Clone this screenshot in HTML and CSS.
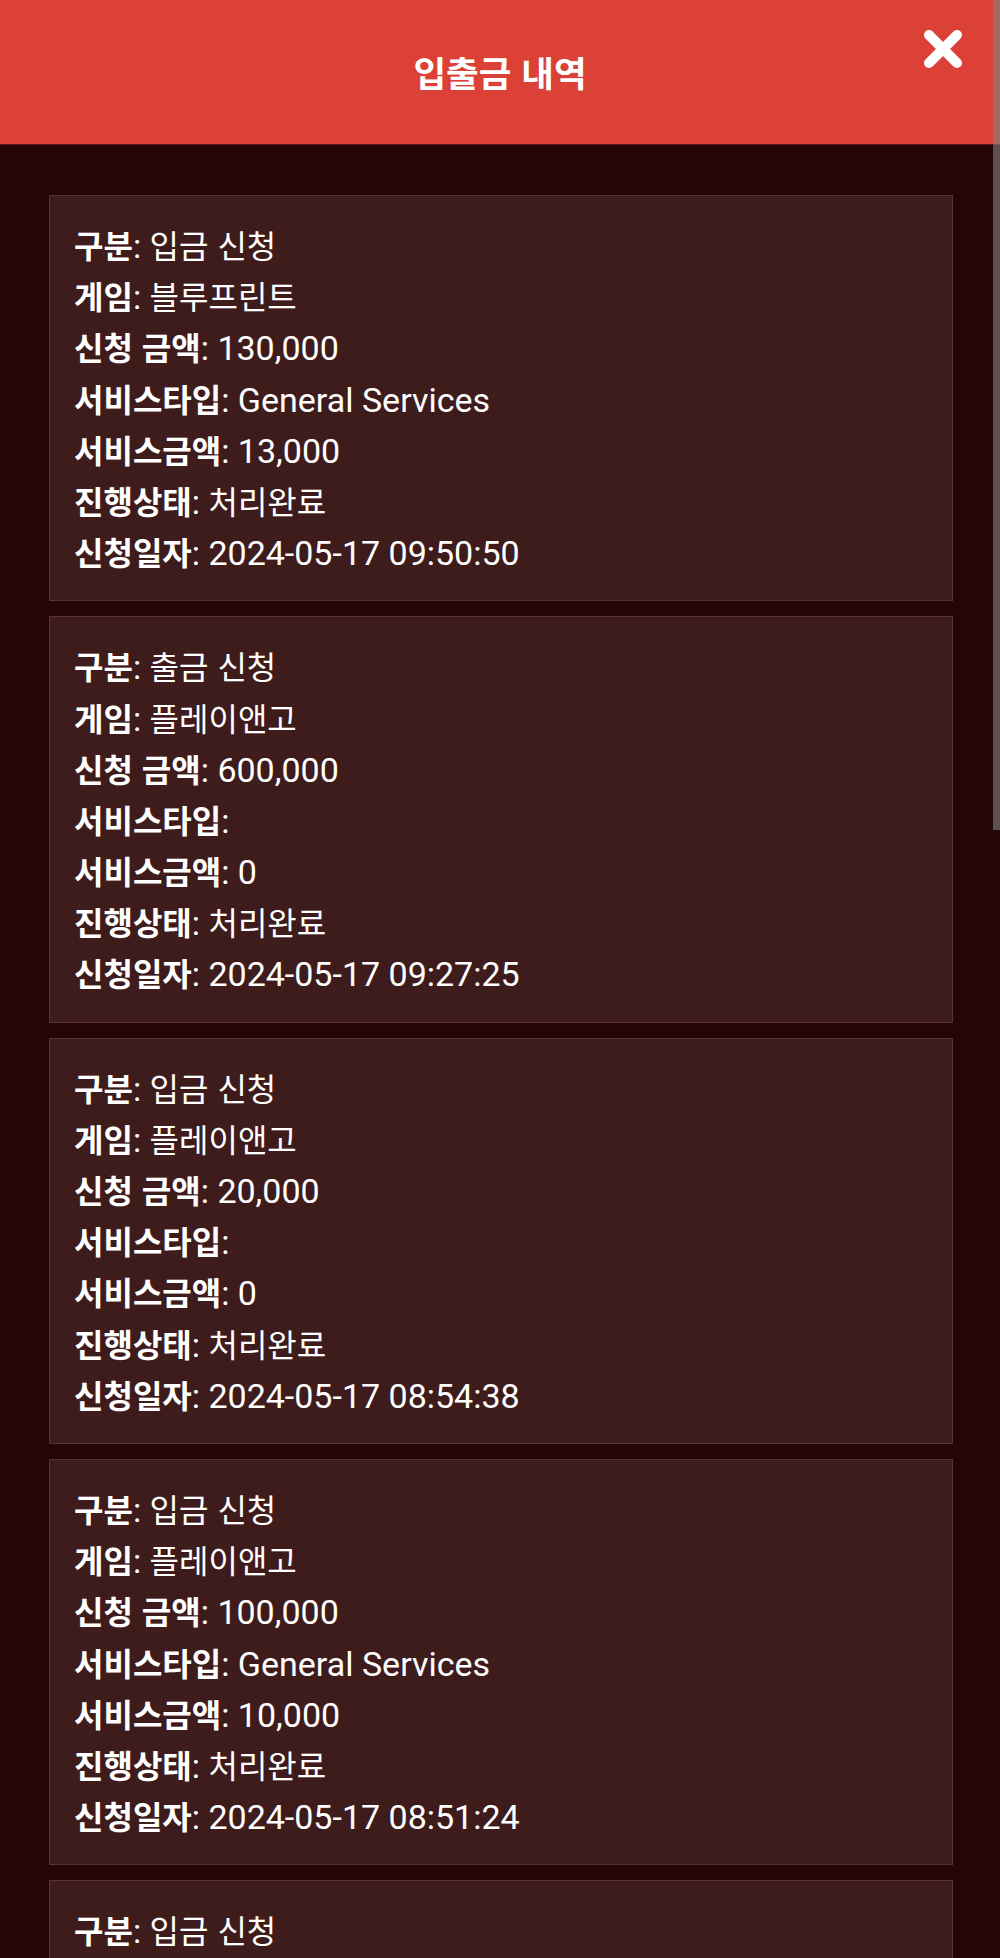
FILE: index.html
```html
<!DOCTYPE html>
<html lang="ko">
<head>
<meta charset="utf-8">
<title>입출금 내역</title>
<link rel="stylesheet" href="styles.css">
</head>
<body>
<div class="page">
  <header class="topbar">
    <h1 class="title">입출금 내역</h1>
    <button class="close" aria-label="닫기">
      <svg width="38" height="38" viewBox="0 0 38 38"><path d="M5 5 L33 33 M33 5 L5 33" stroke="#fff" stroke-width="10" stroke-linecap="round" fill="none"/></svg>
    </button>
  </header>
  <main class="list">
    <section class="card">
      <div class="row"><b class="k">구분</b>: <span class="k">입금 신청</span></div>
      <div class="row"><b class="k">게임</b>: <span class="k">블루프린트</span></div>
      <div class="row"><b class="k">신청 금액</b>: 130,000</div>
      <div class="row"><b class="k">서비스타입</b>: General Services</div>
      <div class="row"><b class="k">서비스금액</b>: 13,000</div>
      <div class="row"><b class="k">진행상태</b>: <span class="k">처리완료</span></div>
      <div class="row"><b class="k">신청일자</b>: 2024-05-17 09:50:50</div>
    </section>
    <section class="card">
      <div class="row"><b class="k">구분</b>: <span class="k">출금 신청</span></div>
      <div class="row"><b class="k">게임</b>: <span class="k">플레이앤고</span></div>
      <div class="row"><b class="k">신청 금액</b>: 600,000</div>
      <div class="row"><b class="k">서비스타입</b>:</div>
      <div class="row"><b class="k">서비스금액</b>: 0</div>
      <div class="row"><b class="k">진행상태</b>: <span class="k">처리완료</span></div>
      <div class="row"><b class="k">신청일자</b>: 2024-05-17 09:27:25</div>
    </section>
    <section class="card">
      <div class="row"><b class="k">구분</b>: <span class="k">입금 신청</span></div>
      <div class="row"><b class="k">게임</b>: <span class="k">플레이앤고</span></div>
      <div class="row"><b class="k">신청 금액</b>: 20,000</div>
      <div class="row"><b class="k">서비스타입</b>:</div>
      <div class="row"><b class="k">서비스금액</b>: 0</div>
      <div class="row"><b class="k">진행상태</b>: <span class="k">처리완료</span></div>
      <div class="row"><b class="k">신청일자</b>: 2024-05-17 08:54:38</div>
    </section>
    <section class="card">
      <div class="row"><b class="k">구분</b>: <span class="k">입금 신청</span></div>
      <div class="row"><b class="k">게임</b>: <span class="k">플레이앤고</span></div>
      <div class="row"><b class="k">신청 금액</b>: 100,000</div>
      <div class="row"><b class="k">서비스타입</b>: General Services</div>
      <div class="row"><b class="k">서비스금액</b>: 10,000</div>
      <div class="row"><b class="k">진행상태</b>: <span class="k">처리완료</span></div>
      <div class="row"><b class="k">신청일자</b>: 2024-05-17 08:51:24</div>
    </section>
    <section class="card card-last">
      <div class="row"><b class="k">구분</b>: <span class="k">입금 신청</span></div>
    </section>
  </main>
  <div class="scrollbar"></div>
</div>
</body>
</html>
```

FILE: styles.css
```css
html, body {
  margin: 0;
  padding: 0;
  height: 100%;
  overflow: hidden;
  background: #240606;
}

.page {
  position: relative;
  height: 1958px;
  overflow: hidden;
  background: #240606;
  font-family: Roboto, "Noto Sans CJK KR", sans-serif;
  color: #fff;
}

.topbar {
  height: 144px;
  background: #db4136;
  border-bottom: 1px solid #5c1d1a;
  display: flex;
  align-items: center;
  justify-content: center;
  position: relative;
}

.title {
  margin: 0;
  font-family: "Noto Sans CJK KR", sans-serif;
  font-weight: 700;
  font-size: 35.5px;
  line-height: 1;
  color: #fff;
}

.close {
  position: absolute;
  top: 30px;
  right: 38px;
  width: 38px;
  height: 38px;
  padding: 0;
  border: 0;
  background: none;
  display: block;
}

.close svg {
  display: block;
}

.list {
  padding: 50px 47px 0 49px;
  display: flex;
  flex-direction: column;
  gap: 15px;
}

.card {
  background: #3e1c1c;
  border: 1px solid #5a3232;
  padding: 23px 24px;
}

.card-last {
  min-height: 400px;
}

.row {
  font-size: 34px;
  line-height: 51.2px;
  height: 51.2px;
  white-space: nowrap;
}

.k {
  font-family: "Noto Sans CJK KR", sans-serif;
  font-size: 32px;
}

b.k {
  font-weight: 700;
}

span.k {
  font-weight: 400;
}

.scrollbar {
  position: absolute;
  top: 0;
  right: 0;
  width: 7px;
  height: 830px;
  background: rgba(128, 128, 128, 0.6);
}
```
